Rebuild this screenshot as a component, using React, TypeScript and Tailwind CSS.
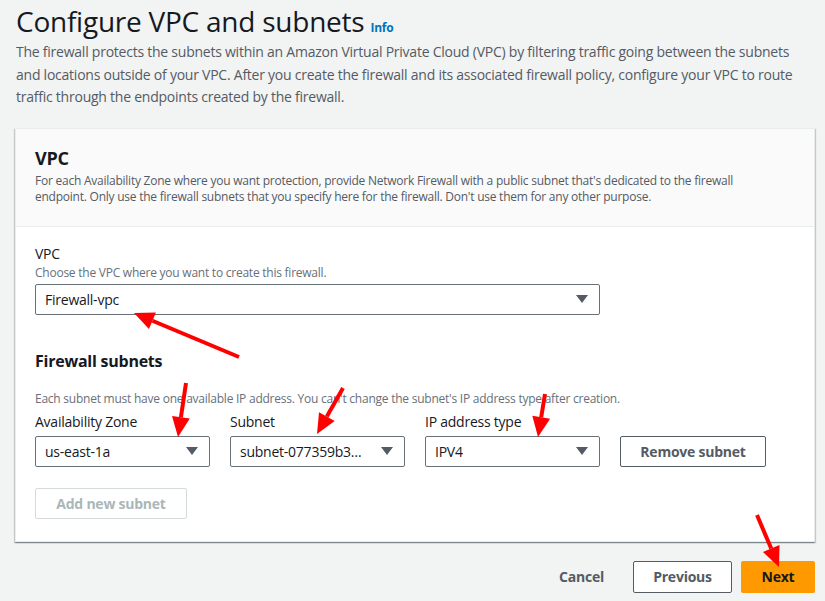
import { ReactNode } from 'react';

const Caret = () => (
  <svg width="14" height="10" viewBox="0 0 14 10" className="shrink-0">
    <path d="M1 1h12L7 9z" fill="#545b64" />
  </svg>
);

const Select = ({ value, className }: { value: string; className: string }) => (
  <div
    className={`h-[31px] flex items-center justify-between pl-[9px] pr-[10px] bg-white border border-[#687078] rounded-[2px] text-[14px] text-[#16191f] ${className}`}
  >
    <span className="truncate">{value}</span>
    <Caret />
  </div>
);

const Field = ({ label, children }: { label: string; children: ReactNode }) => (
  <div className="flex flex-col">
    <span className="text-[14px] leading-[20px] text-[#16191f] mb-[4px]">{label}</span>
    {children}
  </div>
);

// red annotation arrows drawn over the screenshot
const arrows: [number, number, number, number][] = [
  [239, 357, 134, 313],
  [186, 383, 178, 437],
  [343, 388, 317, 434],
  [545, 394, 538, 437],
  [757, 515, 779, 567],
];

const Arrows = () => (
  <svg className="absolute inset-0 pointer-events-none" width="825" height="601">
    {arrows.map(([x1, y1, x2, y2], i) => {
      const a = Math.atan2(y2 - y1, x2 - x1);
      const len = 20;
      const w = 9;
      const bx = x2 - Math.cos(a) * len;
      const by = y2 - Math.sin(a) * len;
      const px = -Math.sin(a) * w;
      const py = Math.cos(a) * w;
      return (
        <g key={i}>
          <line x1={x1} y1={y1} x2={bx} y2={by} stroke="#ff0000" strokeWidth="4" />
          <polygon
            points={`${x2},${y2} ${bx + px},${by + py} ${bx - px},${by - py}`}
            fill="#ff0000"
          />
        </g>
      );
    })}
  </svg>
);

const App = () => {
  return (
    <div className="relative w-[825px] h-[601px] overflow-hidden bg-[#f2f3f3] font-['Open_Sans',sans-serif] tracking-[-0.015em] text-[#16191f]">
      <div className="px-4">
        <div className="flex items-baseline gap-[6px] pt-[3px]">
          <h1 className="text-[28px] leading-[36px] font-normal">Configure VPC and subnets</h1>
          <span className="text-[12px] font-bold text-[#0073bb]">Info</span>
        </div>
        <p className="mt-[2px] text-[14px] leading-[22.5px] text-[#545b64]">
          The firewall protects the subnets within an Amazon Virtual Private Cloud (VPC) by filtering traffic going between the subnets and locations outside of your VPC. After you create the firewall and its associated firewall policy, configure your VPC to route traffic through the endpoints created by the firewall.
        </p>
      </div>

      <div className="mx-[15px] mt-[19px] w-[800px] h-[414px] bg-white border border-[#eaeded] shadow-[0_1px_1px_0_rgba(0,28,36,0.3),1px_1px_1px_0_rgba(0,28,36,0.15),-1px_1px_1px_0_rgba(0,28,36,0.15)]">
        <div className="h-[98px] bg-[#fafafa] border-b border-[#eaeded] px-[19px] pt-[17px]">
          <h2 className="text-[18px] leading-[24px] font-bold">VPC</h2>
          <p className="mt-[3px] max-w-[725px] text-[12px] leading-[16px] text-[#545b64]">
            For each Availability Zone where you want protection, provide Network Firewall with a public subnet that's dedicated to the firewall endpoint. Only use the firewall subnets that you specify here for the firewall. Don't use them for any other purpose.
          </p>
        </div>
        <div className="px-[19px] pt-[17px]">
          <div className="text-[14px] leading-[20px]">VPC</div>
          <div className="text-[12px] leading-[16px] text-[#687078] mt-[1px]">
            Choose the VPC where you want to create this firewall.
          </div>
          <Select value="Firewall-vpc" className="w-[565px] mt-[3px]" />

          <h3 className="mt-[35px] text-[16px] leading-[22px] font-bold">Firewall subnets</h3>
          <p className="mt-[19px] text-[12px] leading-[16px] text-[#687078]">
            Each subnet must have one available IP address. You can't change the subnet's IP address type after creation.
          </p>
          <div className="flex items-end gap-[20px] mt-[5px]">
            <Field label="Availability Zone">
              <Select value="us-east-1a" className="w-[175px]" />
            </Field>
            <Field label="Subnet">
              <Select value="subnet-077359b3…" className="w-[175px]" />
            </Field>
            <Field label="IP address type">
              <Select value="IPV4" className="w-[175px]" />
            </Field>
            <button className="h-[31px] w-[146px] border border-[#545b64] rounded-[2px] bg-white text-[14px] font-bold text-[#545b64]">
              Remove subnet
            </button>
          </div>
          <button className="mt-[21px] h-[31px] w-[152px] border border-[#d5dbdb] rounded-[2px] bg-white text-[14px] font-bold text-[#aab7b8]">
            Add new subnet
          </button>
        </div>
      </div>

      <div className="flex justify-end items-center gap-[9px] pr-[10px] mt-[19px]">
        <button className="h-[32px] px-[20px] text-[14px] font-bold text-[#545b64]">Cancel</button>
        <button className="h-[32px] w-[99px] border border-[#545b64] rounded-[2px] bg-white text-[14px] font-bold text-[#545b64]">
          Previous
        </button>
        <button className="h-[32px] w-[74px] rounded-[2px] bg-[#ff9900] text-[14px] font-bold text-[#16191f]">
          Next
        </button>
      </div>

      <Arrows />
    </div>
  );
};

export default App;
